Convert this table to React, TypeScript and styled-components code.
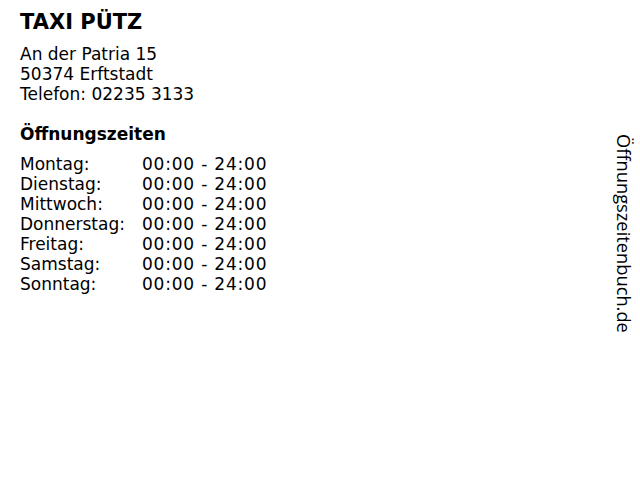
import styled, { createGlobalStyle } from 'styled-components'

const GlobalStyle = createGlobalStyle`
  html, body {
    margin: 0;
    padding: 0;
    background: #ffffff;
  }
  body {
    font-family: "DejaVu Sans", Verdana, sans-serif;
    color: #000000;
  }
`

const hours = [
  { day: 'Montag:', time: '00:00 - 24:00' },
  { day: 'Dienstag:', time: '00:00 - 24:00' },
  { day: 'Mittwoch:', time: '00:00 - 24:00' },
  { day: 'Donnerstag:', time: '00:00 - 24:00' },
  { day: 'Freitag:', time: '00:00 - 24:00' },
  { day: 'Samstag:', time: '00:00 - 24:00' },
  { day: 'Sonntag:', time: '00:00 - 24:00' },
]

export default function App() {
  return (
    <>
      <GlobalStyle />
      <Page>
        <Content>
          <Title>TAXI PÜTZ</Title>
          <Address>
            <Line>An der Patria 15</Line>
            <Line>50374 Erftstadt</Line>
            <Line>Telefon: 02235 3133</Line>
          </Address>
          <Heading>Öffnungszeiten</Heading>
          <HoursTable>
            {hours.map((row) => (
              <Row key={row.day}>
                <Day>{row.day}</Day>
                <Time>{row.time}</Time>
              </Row>
            ))}
          </HoursTable>
        </Content>
        <Side>
          <SideText>Öffnungszeitenbuch.de</SideText>
        </Side>
      </Page>
    </>
  )
}

const Page = styled.main`
  width: 640px;
  height: 480px;
  display: flex;
  justify-content: space-between;
  box-sizing: border-box;
  padding: 10px 0 0 20px;
`

const Content = styled.div`
  display: flex;
  flex-direction: column;
`

const Title = styled.h1`
  margin: 0;
  font-size: 21px;
  line-height: 24px;
  font-weight: bold;
`

const Address = styled.div`
  margin-top: 10px;
  font-size: 17px;
  line-height: 20px;
`

const Line = styled.div``

const Heading = styled.h2`
  margin: 20px 0 0;
  font-size: 17px;
  line-height: 20px;
  font-weight: bold;
`

const HoursTable = styled.div`
  margin-top: 10px;
  display: grid;
  grid-template-columns: auto auto;
  column-gap: 17px;
  font-size: 17px;
  line-height: 20px;
`

const Row = styled.div`
  display: contents;
`

const Day = styled.span``

const Time = styled.span`
  text-align: right;
  letter-spacing: 0.8px;
`

const Side = styled.aside`
  width: 40px;
  display: flex;
  justify-content: center;
  padding: 124px 0 0 8px;
  box-sizing: border-box;
`

const SideText = styled.div`
  writing-mode: vertical-rl;
  font-family: "Open Sans", sans-serif;
  font-size: 18.3px;
  line-height: 20px;
  height: fit-content;
`
